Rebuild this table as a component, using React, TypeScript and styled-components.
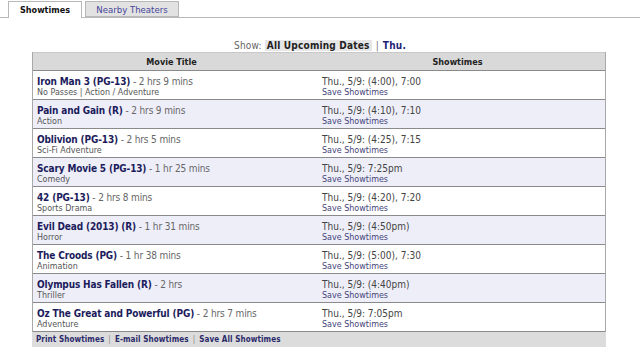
import React from "react";
import styled, { createGlobalStyle } from "styled-components";

const Global = createGlobalStyle`
  html, body { margin: 0; padding: 0; background: #fff; }
  body { font-family: "DejaVu Sans Condensed", "DejaVu Sans", Verdana, sans-serif; font-stretch: condensed; }
`;

const Page = styled.div`
  width: 640px;
  height: 361px;
  overflow: hidden;
  background: #fff;
`;

const TabBar = styled.div`
  display: flex;
  gap: 3px;
  padding: 1px 0 0 8px;
  border-bottom: 1px solid #b8b8b8;
  height: 18px;
  box-sizing: border-box;
`;

const Tab = styled.div<{ $active?: boolean }>`
  display: flex;
  align-items: center;
  justify-content: center;
  width: ${(p) => (p.$active ? 74 : 94)}px;
  box-sizing: border-box;
  height: ${(p) => (p.$active ? 17 : 16)}px;
  border: 1px solid #b8b8b8;
  border-bottom: ${(p) => (p.$active ? "none" : "1px solid #b8b8b8")};
  background: ${(p) => (p.$active ? "#fff" : "#e2e2e2")};
  color: ${(p) => (p.$active ? "#111" : "#46469a")};
  font-weight: ${(p) => (p.$active ? 700 : 400)};
  font-size: ${(p) => (p.$active ? 9 : 9.5)}px;
  margin-bottom: -1px;
`;

const ShowBar = styled.div`
  display: flex;
  align-items: center;
  padding: 21px 0 0 234px;
  height: 12px;
  font-size: 10px;
  letter-spacing: 0.2px;
  color: #666;
`;

const ShowCurrent = styled.span`
  background: #e6e6e6;
  color: #222;
  font-weight: 700;
  padding: 0 2px;
  margin-left: 3px;
`;

const Sep = styled.span`
  color: #777;
  margin: 0 4px;
`;

const ShowLink = styled.span`
  color: #1f1f7a;
  font-weight: 700;
`;

const Table = styled.div`
  margin: 1px 0 0 32px;
  width: 574px;
  border-left: 1px solid #a8a8a8;
  border-right: 1px solid #a8a8a8;
  box-sizing: border-box;
`;

const HeaderRow = styled.div`
  display: grid;
  grid-template-columns: 277px 1fr;
  height: 19px;
  box-sizing: border-box;
  background: #d9d9d9;
  border-top: 1px solid #c8c8c8;
  border-bottom: 1px solid #8a8a8a;
  align-items: center;
  font-size: 9px;
  font-weight: 700;
  color: #222;
  text-align: center;
`;

const Row = styled.div<{ $alt: boolean }>`
  display: grid;
  grid-template-columns: 277px 1fr;
  height: 29px;
  box-sizing: border-box;
  background: ${(p) => (p.$alt ? "#eeeef9" : "#fff")};
  border-bottom: 1px solid #8a8a8a;
`;

const TitleCell = styled.div`
  padding: 4px 0 0 4px;
  display: flex;
  flex-direction: column;
`;

const TimeCell = styled.div`
  padding: 4px 0 0 12px;
  display: flex;
  flex-direction: column;
`;

const TitleLine = styled.div`
  font-size: 10px;
  line-height: 13px;
  letter-spacing: -0.15px;
  color: #666;
  white-space: nowrap;
`;

const MovieName = styled.span`
  font-weight: 700;
  color: #1c1c5c;
`;

const SubLine = styled.div`
  font-family: "DejaVu Sans", Verdana, sans-serif;
  font-stretch: normal;
  font-size: 8px;
  line-height: 10px;
  color: #555;
  white-space: nowrap;
`;

const TimeLine = styled.div`
  font-size: 10px;
  line-height: 13px;
  color: #444;
`;

const SaveLink = styled.div`
  font-family: "DejaVu Sans", Verdana, sans-serif;
  font-stretch: normal;
  font-size: 8px;
  line-height: 10px;
  color: #44447a;
`;

const Footer = styled.div`
  margin-left: 32px;
  width: 574px;
  height: 15px;
  background: #dcdcdc;
  display: flex;
  align-items: center;
  padding-left: 4px;
  box-sizing: border-box;
  font-size: 8px;
  font-weight: 700;
  letter-spacing: 0.1px;
  color: #2a2a6a;
`;

const FooterSep = styled.span`
  color: #888;
  font-weight: 400;
  margin: 0 4px;
`;

const movies = [
  { name: "Iron Man 3 (PG-13)", len: "2 hrs 9 mins", sub: "No Passes | Action / Adventure", time: "Thu., 5/9: (4:00), 7:00" },
  { name: "Pain and Gain (R)", len: "2 hrs 9 mins", sub: "Action", time: "Thu., 5/9: (4:10), 7:10" },
  { name: "Oblivion (PG-13)", len: "2 hrs 5 mins", sub: "Sci-Fi Adventure", time: "Thu., 5/9: (4:25), 7:15" },
  { name: "Scary Movie 5 (PG-13)", len: "1 hr 25 mins", sub: "Comedy", time: "Thu., 5/9: 7:25pm" },
  { name: "42 (PG-13)", len: "2 hrs 8 mins", sub: "Sports Drama", time: "Thu., 5/9: (4:20), 7:20" },
  { name: "Evil Dead (2013) (R)", len: "1 hr 31 mins", sub: "Horror", time: "Thu., 5/9: (4:50pm)" },
  { name: "The Croods (PG)", len: "1 hr 38 mins", sub: "Animation", time: "Thu., 5/9: (5:00), 7:30" },
  { name: "Olympus Has Fallen (R)", len: "2 hrs", sub: "Thriller", time: "Thu., 5/9: (4:40pm)" },
  { name: "Oz The Great and Powerful (PG)", len: "2 hrs 7 mins", sub: "Adventure", time: "Thu., 5/9: 7:05pm" },
];

export default function App() {
  return (
    <Page>
      <Global />
      <TabBar>
        <Tab $active>Showtimes</Tab>
        <Tab>Nearby Theaters</Tab>
      </TabBar>
      <ShowBar>
        Show:<ShowCurrent>All Upcoming Dates</ShowCurrent>
        <Sep>|</Sep>
        <ShowLink>Thu.</ShowLink>
      </ShowBar>
      <Table>
        <HeaderRow>
          <div>Movie Title</div>
          <div>Showtimes</div>
        </HeaderRow>
        {movies.map((m, i) => (
          <Row key={m.name} $alt={i % 2 === 1}>
            <TitleCell>
              <TitleLine>
                <MovieName>{m.name}</MovieName> - {m.len}
              </TitleLine>
              <SubLine>{m.sub}</SubLine>
            </TitleCell>
            <TimeCell>
              <TimeLine>{m.time}</TimeLine>
              <SaveLink>Save Showtimes</SaveLink>
            </TimeCell>
          </Row>
        ))}
      </Table>
      <Footer>
        Print Showtimes<FooterSep>|</FooterSep>E-mail Showtimes<FooterSep>|</FooterSep>Save All Showtimes
      </Footer>
    </Page>
  );
}
